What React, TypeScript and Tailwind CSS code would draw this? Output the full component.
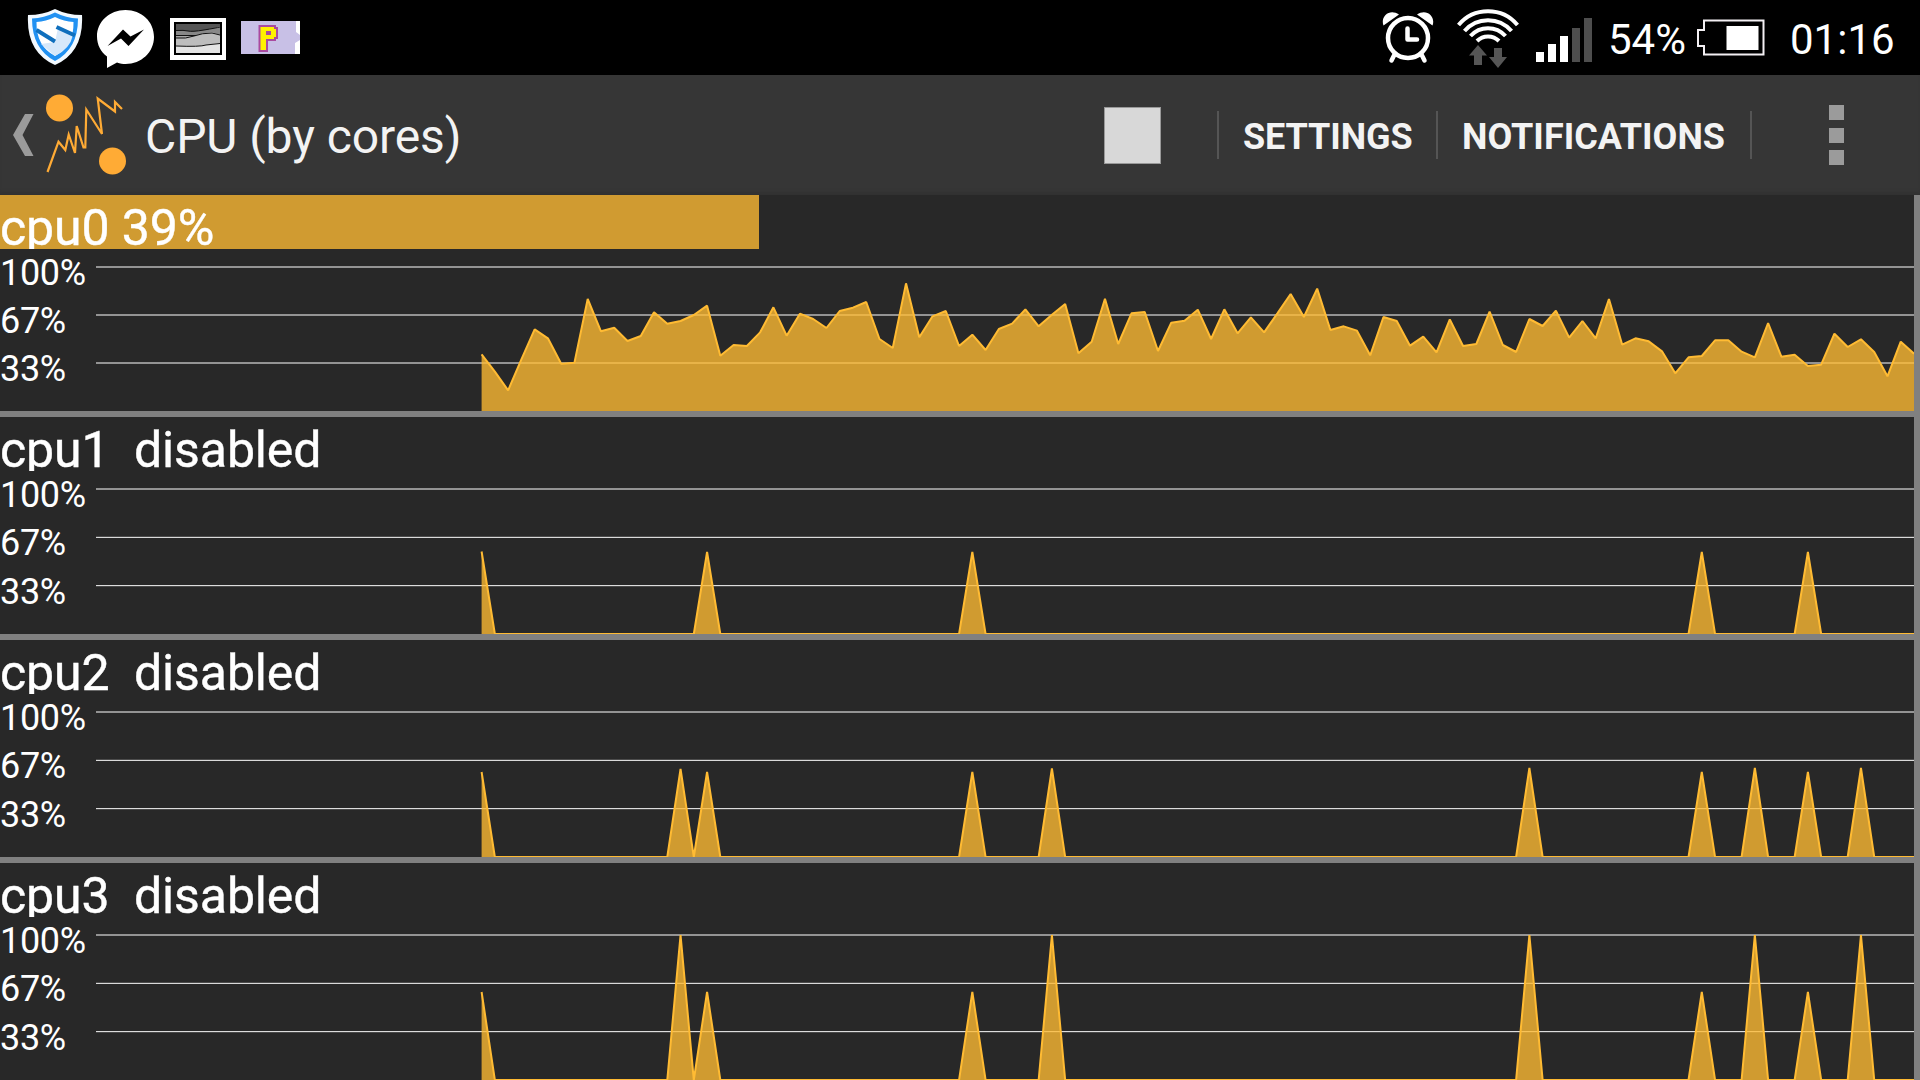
import React from "react";

const STEP = 13.263;
const START = 481.6;
const WIDTH = 1914;

// Vertical samples in thirds of a pixel; 51 is the 100% line.
const cpu0 = [
  313, 365, 421, 328, 238, 265, 341, 338, 147, 244, 233, 273, 258, 187, 221, 213, 195, 167, 317, 285, 288, 247, 172,
  257, 191, 207, 234, 183, 173, 156, 267, 294, 100, 262, 199, 183, 288, 254, 300, 237, 221, 178, 229, 194, 162, 310,
  275, 146, 282, 190, 186, 303, 218, 212, 179, 267, 178, 250, 202, 247, 190, 132, 201, 116, 240, 229, 242, 316, 201,
  213, 287, 260, 307, 208, 288, 282, 185, 285, 306, 207, 228, 182, 263, 213, 265, 147, 284, 265, 274, 304, 370, 322,
  318, 271, 271, 305, 322, 219, 320, 314, 348, 344, 251, 291, 268, 306, 379, 275, 311,
].map((v) => (v - 51) / 3);

function spikes(base: number, peaks: Record<number, number>) {
  return Array.from({ length: 109 }, (_, i) => (i in peaks ? peaks[i] : base));
}

type Core = { name: string; load: number | null; base: number; trace: number[] };

const cores: Core[] = [
  { name: "cpu0", load: 39, base: 144, trace: cpu0 },
  { name: "cpu1", load: null, base: 145, trace: spikes(145, { 0: 62.5, 17: 63, 37: 63, 92: 63, 100: 63 }) },
  {
    name: "cpu2",
    load: null,
    base: 145,
    trace: spikes(145, { 0: 60, 15: 57, 17: 60, 37: 60, 43: 56.5, 79: 56, 92: 60, 96: 56, 100: 60, 104: 56 }),
  },
  {
    name: "cpu3",
    load: null,
    base: 145,
    trace: spikes(145, { 0: 57, 15: 0, 17: 57, 37: 57, 43: 0, 79: 0, 92: 57, 96: 0, 100: 57, 104: 0 }),
  },
];

function Chart({ base, trace }: { base: number; trace: number[] }) {
  const line = trace.map((y, i) => `${(START + i * STEP).toFixed(2)},${y.toFixed(2)}`).join(" ");
  const end = START + (trace.length - 1) * STEP;
  return (
    <svg className="absolute left-0 top-0" width={WIDTH} height={base + 18} viewBox={`0 -18 ${WIDTH} ${base + 18}`}>
      {[0, base / 3, (base * 2) / 3].map((y) => (
        <line key={y} x1={96} x2={WIDTH} y1={y} y2={y} stroke="#fff" strokeWidth={1} />
      ))}
      <polygon points={`${START},${base} ${line} ${end},${base}`} fill="#ffbb33" fillOpacity={0.784} />
      <polyline points={line} fill="none" stroke="#ffbb33" strokeWidth={2} strokeLinejoin="bevel" />
    </svg>
  );
}

function CoreRow({ core, last }: { core: Core; last: boolean }) {
  return (
    <section className={last ? "" : "border-b-[6px] border-[#808080]"}>
      <div className="relative h-[54px] overflow-hidden">
        {core.load !== null && <div className="absolute inset-y-0 left-0 w-[759px] bg-[#d09b31]" />}
        <div className="relative whitespace-pre pt-[3px] text-[50px] leading-[60px] tracking-[-0.12px] text-white [-webkit-text-stroke:0.4px_#fff]">
          {core.load !== null ? `${core.name} ${core.load}%` : `${core.name}  disabled`}
        </div>
      </div>
      <div
        className={
          core.base === 144
            ? "relative flex h-[162px] flex-col text-[36px] leading-[48px] tracking-[-0.3px] text-white"
            : "relative flex h-[163px] flex-col text-[36px] leading-[48.33px] tracking-[-0.3px] text-white"
        }
      >
        <Chart base={core.base} trace={core.trace} />
        <span>100%</span>
        <span>67%</span>
        <span>33%</span>
      </div>
    </section>
  );
}

function ShieldIcon() {
  return (
    <svg width="56" height="58" viewBox="0 0 56 58">
      <path d="M28 1 Q16 7 1 7 Q-1 44 28 57 Q57 44 55 7 Q40 7 28 1Z" fill="#f2f9ff" />
      <path d="M28 4.500Q17 10 5 10.500Q5 41 28 53Q51 41 51 10.500Q39 10 28 4.500Z" fill="#2191f2" />
      <path d="M28 9Q19 13.500 9.500 14Q9 38 28 48Q47 38 46.500 14Q37 13.500 28 9Z" fill="#fff" />
      <path d="M31 20L46 27Q43 41 28 48L14 36L28 34Z" fill="#d6e8fa" />
      <path d="M9.500 22L28 33.500M29.500 19L48 27.500" stroke="#0f6fbd" strokeWidth="4" />
    </svg>
  );
}

function MessengerIcon() {
  return (
    <svg width="57" height="58" viewBox="0 0 57 58">
      <path d="M28.500 0C12.500 0 0 11.500 0 26.500C0 35 4 42 10 46.500V58L20 52.500C23 53.500 26 54 28.500 54C44.500 54 57 42 57 27C57 11.500 44.500 0 28.500 0Z" fill="#fff" />
      <path d="M10.500 36L26 19.500L33.500 26.500L47 19.500L31.500 36L24 28.500Z" fill="#000" />
    </svg>
  );
}

function TerrainIcon() {
  return (
    <svg width="56" height="42" viewBox="0 0 56 42">
      <rect width="56" height="42" fill="#fff" />
      <rect x="4" y="4" width="48" height="33" fill="#000" />
      <rect x="6" y="6" width="44" height="29" fill="#555" />
      <path d="M6 13Q14 12 18 13T34 12T50 8V35H6Z" fill="#888" />
      <path d="M6 17H26Q38 15 50 16V35H6Z" fill="#a8a8a8" />
      <path d="M6 20Q16 21 24 18T42 14L50 17V35H6Z" fill="#bdbdbd" />
      <path d="M6 28Q30 29 36 27L50 25V35H6Z" fill="#e4e4e4" />
      <path d="M6 12.500Q14 12 18 13T34 12T50 9M6 17.500H26M6 20Q16 21 24 18T42 15L50 17M6 28Q30 29 36 27L50 25.500" fill="none" stroke="#111" />
    </svg>
  );
}

function ParkingIcon() {
  return (
    <div className="flex h-[33px] w-[59px] items-center bg-[#c8c0e6]">
      <svg width="59" height="33" viewBox="0 0 59 33">
        <path d="M55 0H59V14L55 11ZM59 19V33H54V22Z" fill="#fff" />
        <path d="M17.500 4H35V6H37V18H35V20H27V31H17.500Z" fill="#a94aa0" />
        <path d="M19.500 6H33V8H35V16H33V18H25V29H19.500Z" fill="#fff200" />
        <rect x="25" y="10" width="5" height="4" fill="#a94aa0" />
      </svg>
    </div>
  );
}

function AlarmIcon() {
  return (
    <svg width="52" height="56" viewBox="0 0 52 56">
      <path d="M1.500 15.500C-2 6 8-2 17 4.500ZM50.500 15.500C54 6 44-2 35 4.500Z" fill="#fff" />
      <circle cx="26" cy="28" r="20" fill="none" stroke="#fff" strokeWidth="4.500" />
      <path d="M25.500 18.500V29.500H35" fill="none" stroke="#fff" strokeWidth="4.500" strokeLinecap="round" strokeLinejoin="round" />
      <path d="M12 45.500L9.500 50.500M40 45.500L42.500 50.500" stroke="#fff" strokeWidth="4.500" strokeLinecap="round" />
    </svg>
  );
}

function WifiIcon() {
  return (
    <svg width="62" height="62" viewBox="0 0 62 62">
      <g fill="none" stroke="#fff" strokeWidth="4">
        <path d="M1.500 18A38.500 38.500 0 0 1 60.500 18" />
        <path d="M7.500 24A31 31 0 0 1 54.500 24" />
        <path d="M13.500 29A23.500 23.500 0 0 1 48.500 29" />
        <path d="M20 34A15.500 15.500 0 0 1 42 34" />
      </g>
      <path d="M21 38L30 48.500H25V58H17V48.500H12Z" fill="#565656" />
      <path d="M37 41H45V50H50L41 61L32 50H37Z" fill="#565656" />
    </svg>
  );
}

function SignalIcon() {
  return (
    <svg width="57" height="44" viewBox="0 0 57 44">
      <path d="M0 34h8v10H0ZM12 26h8v18h-8ZM24 18h8v26h-8Z" fill="#fff" />
      <path d="M36 10h8v34h-8ZM48 0h8v44h-8Z" fill="#4e4e4e" />
    </svg>
  );
}

function BatteryIcon() {
  return (
    <svg width="68" height="37" viewBox="0 0 68 37">
      <path d="M7 1.500H66.500V35.500H7V27H1V11H7Z" fill="none" stroke="#f4f0f4" strokeWidth="2" />
      <rect x="29.500" y="7" width="32" height="24" fill="#fff" />
    </svg>
  );
}

function StatusBar() {
  return (
    <header className="flex h-[75px] items-start bg-black text-[42px] leading-[50px] text-white">
      <div className="ml-[27px] mt-[8px]"><ShieldIcon /></div>
      <div className="ml-[14px] mt-[10px]"><MessengerIcon /></div>
      <div className="ml-[16px] mt-[18px]"><TerrainIcon /></div>
      <div className="ml-[15px] mt-[21px]"><ParkingIcon /></div>
      <div className="ml-auto mt-[10px]"><AlarmIcon /></div>
      <div className="ml-[23px] mt-[7px]"><WifiIcon /></div>
      <div className="ml-[17px] mt-[18px]"><SignalIcon /></div>
      <div className="ml-[15px] mt-[15px] w-[89px]">54%</div>
      <div className="mt-[19px]"><BatteryIcon /></div>
      <div className="ml-[25px] mt-[15px] w-[130px]">01:16</div>
    </header>
  );
}

function AppIcon() {
  return (
    <svg width="82" height="82" viewBox="0 0 82 82" className="ml-[11px] mr-[1px]">
      <circle cx="14.500" cy="14" r="13.500" fill="#ffab35" />
      <circle cx="67.500" cy="67" r="13.500" fill="#ffab35" />
      <path d="M2.500 78L13.500 47.700L20.300 56L23.700 40.500L30 59L31.700 32L38.500 53.500H40.300L41.300 15.500L57 40L52.700 4.500L70 17.500V8L77 15" fill="none" stroke="#ffab35" strokeWidth="2.200" />
    </svg>
  );
}

function Divider() {
  return <div className="h-[48px] w-[2px] bg-[#555]" />;
}

function ActionBar() {
  return (
    <nav className="flex h-[120px] items-center bg-[#363636] text-[#f3f3f3] shadow-[inset_0_-5px_4px_-3px_#303030]">
      <svg width="21" height="42" viewBox="0 0 21 42" className="ml-[13px]">
        <path d="M12 0H20.500L9.500 21L20.500 42H12L0 21Z" fill="#9b9b9b" />
      </svg>
      <AppIcon />
      <h1 className="ml-[17px] pt-[4px] text-[48px] font-normal leading-[56px] tracking-[-0.08px]">CPU (by cores)</h1>
      <div className="ml-auto flex items-center text-[36px] font-bold">
        <div className="mr-[56px] h-[57px] w-[57px] border border-[#999] bg-[#d8d8d8]" />
        <Divider />
        <div className="w-[217px] pl-[24px] pt-[4px] tracking-[-0.1px]">SETTINGS</div>
        <Divider />
        <div className="w-[312px] pl-[24px] pt-[4px]">NOTIFICATIONS</div>
        <Divider />
        <div className="ml-[77px] mr-[76px] flex flex-col gap-[7.500px]">
          <i className="block size-[15px] bg-[#9b9b9b]" />
          <i className="block size-[15px] bg-[#9b9b9b]" />
          <i className="block size-[15px] bg-[#9b9b9b]" />
        </div>
      </div>
    </nav>
  );
}

export default function App() {
  return (
    <div className="flex h-[1080px] w-[1920px] flex-col overflow-hidden bg-[#282828] font-[Roboto,sans-serif]">
      <StatusBar />
      <ActionBar />
      <main className="h-[885px] border-r-[6px] border-[#808080]">
        {cores.map((c, i) => (
          <CoreRow key={c.name} core={c} last={i === cores.length - 1} />
        ))}
      </main>
    </div>
  );
}
